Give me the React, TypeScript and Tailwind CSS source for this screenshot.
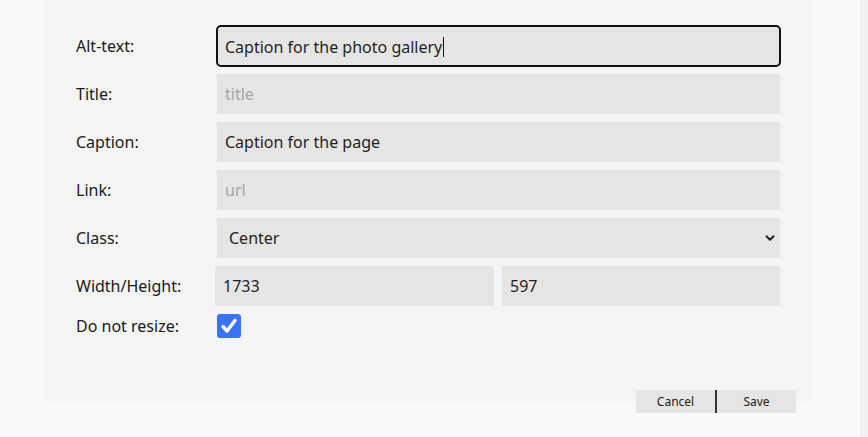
import { ChevronDownIcon } from "lucide-react";

const font = { fontFamily: '"Noto Sans", "Open Sans", sans-serif' };

const Row = ({ label, children }: { label: string; children: React.ReactNode }) => (
  <div className="flex h-10 items-center">
    <span className="w-[141px] shrink-0 text-base text-[#1a1a1a]">{label}</span>
    {children}
  </div>
);

const Field = ({ value, placeholder, focused }: { value?: string; placeholder?: string; focused?: boolean }) => (
  <div
    className={
      "flex h-10 w-[563px] items-center bg-[#e6e5e3] px-2 text-base " +
      (focused ? "rounded-[4px] outline-2 outline-offset-[-1px] outline-[#111]" : "")
    }
  >
    {value ? (
      <span className="text-[#1f1f1f]">
        {value}
        {focused ? <span className="ml-px inline-block h-[20px] w-px translate-y-[4px] bg-[#111]" /> : null}
      </span>
    ) : (
      <span className="text-[#a3a6ad]">{placeholder}</span>
    )}
  </div>
);

export default function App() {
  return (
    <div className="flex h-[437px] w-[868px] bg-[#f9f9f8]" style={font}>
      <div className="w-[860px]">
        <div className="ml-[44px] h-[401px] w-[768px] bg-[#f4f4f3] pl-[32px] pt-[26px]">
          <div className="flex flex-col gap-2">
            <Row label="Alt-text:">
              <Field value="Caption for the photo gallery" focused />
            </Row>
            <Row label="Title:">
              <Field placeholder="title" />
            </Row>
            <Row label="Caption:">
              <Field value="Caption for the page" />
            </Row>
            <Row label="Link:">
              <Field placeholder="url" />
            </Row>
            <Row label="Class:">
              <div className="flex h-10 w-[563px] items-center justify-between bg-[#e6e5e3] pl-3 pr-[3px] text-base text-[#1f1f1f]">
                <span>Center</span>
                <ChevronDownIcon className="size-3.5 text-[#222]" strokeWidth={3.5} />
              </div>
            </Row>
            <Row label="Width/Height:">
              <div className="-ml-[2px] flex gap-2">
                <div className="flex h-10 w-[279px] items-center bg-[#e6e5e3] px-2 text-base text-[#1f1f1f]">1733</div>
                <div className="flex h-10 w-[278px] items-center bg-[#e6e5e3] px-2 text-base text-[#1f1f1f]">597</div>
              </div>
            </Row>
            <div className="flex h-6 items-center">
              <span className="w-[141px] shrink-0 text-base text-[#1a1a1a]">Do not resize:</span>
              <div className="flex size-6 items-center justify-center rounded-[3px] bg-[#3b73f5]">
                <svg viewBox="0 0 24 24" className="size-6" fill="none" stroke="white" strokeWidth={3.4} strokeLinecap="round" strokeLinejoin="round">
                  <path d="M6 12.5l4 4.5 8-10.5" />
                </svg>
              </div>
            </div>
          </div>
        </div>
        <div className="-mt-[11px] ml-[636px] flex h-[23px] text-xs text-[#222]">
          <button type="button" className="w-[79px] bg-[#e6e5e3]">Cancel</button>
          <div className="w-[2px] bg-[#333]" />
          <button type="button" className="w-[79px] bg-[#e6e5e3]">Save</button>
        </div>
      </div>
      <div className="w-[8px] bg-[#f1f1f0]" />
    </div>
  );
}
